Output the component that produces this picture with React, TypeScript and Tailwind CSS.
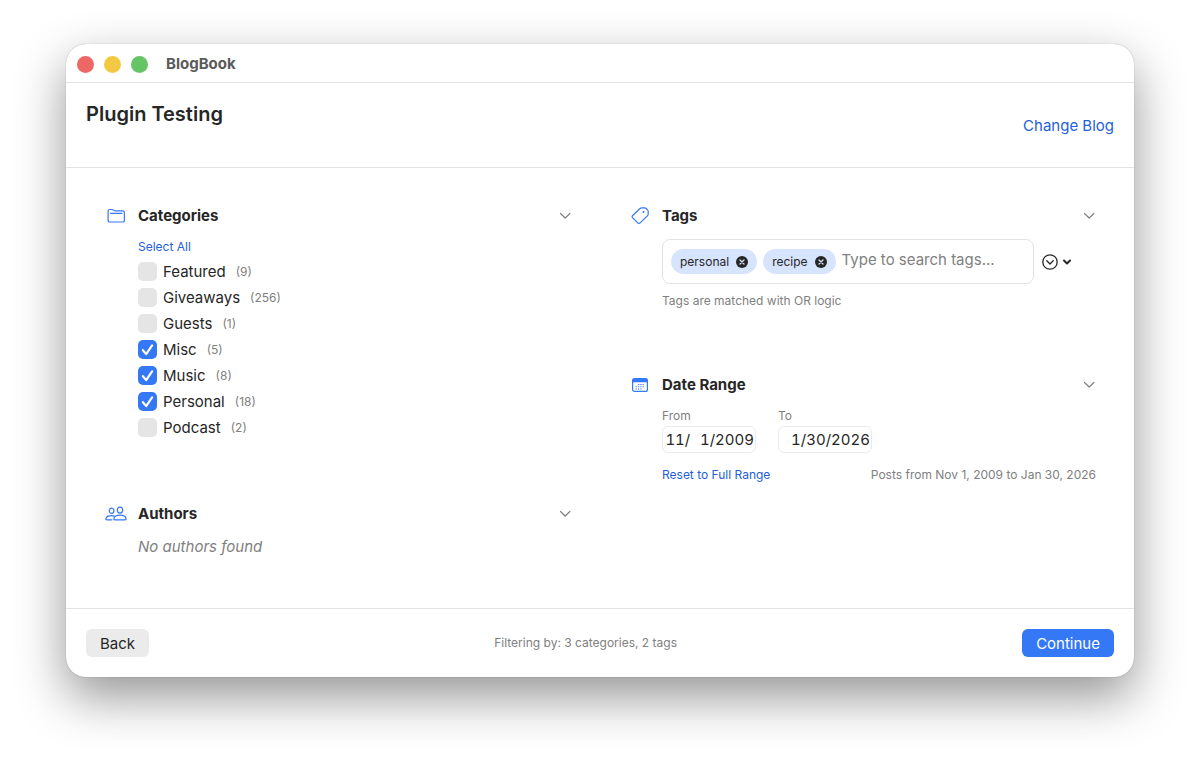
import { useState } from "react";
import type { ReactNode } from "react";

const CATEGORIES = [
  { name: "Featured", count: 9 },
  { name: "Giveaways", count: 256 },
  { name: "Guests", count: 1 },
  { name: "Misc", count: 5 },
  { name: "Music", count: 8 },
  { name: "Personal", count: 18 },
  { name: "Podcast", count: 2 },
];

function FolderIcon() {
  return (
    <svg width="20" height="16" viewBox="0 0 20 16" fill="none" stroke="#3478f6" strokeWidth="1.2" strokeLinejoin="round" strokeLinecap="round">
      <path d="M2.100 12.400V3.100c0-1 .6-1.600 1.600-1.600h2.400c.5 0 .8.1 1.200.4l.6.5c.3.3.6.4 1.100.4h7.700c1 0 1.700.6 1.700 1.600v8c0 1-.6 1.600-1.700 1.600H3.700c-1 0-1.600-.6-1.600-1.600z" />
      <path d="M4.500 5.300h11.500" />
    </svg>
  );
}

function TagIcon() {
  return (
    <svg width="20" height="20" viewBox="0 0 20 20" fill="none" stroke="#3478f6" strokeWidth="1.2" strokeLinejoin="round">
      <path d="M11.800 1.800h2.700c.7 0 1.200.2 1.700.7l1.300 1.300c.5.500.7 1 .7 1.700v2.500c0 .8-.2 1.300-.8 1.900l-7.300 7c-.8.800-1.600.800-2.400 0l-5-5c-.8-.8-.8-1.600 0-2.400l7.300-7c.5-.5 1-.7 1.800-.7z" />
      <circle cx="13.500" cy="6.100" r="1" fill="#3478f6" stroke="none" />
    </svg>
  );
}

function CalendarIcon() {
  return (
    <svg width="16" height="16" viewBox="0 0 16 16" fill="none">
      <rect x="0.600" y="1.600" width="14.800" height="12.800" rx="2" stroke="#3478f6" strokeWidth="1.200" />
      <path d="M0.600 5.200V3.500c0-1.200.8-2 2-2h10.800c1.200 0 2 .8 2 2v1.700z" fill="#3478f6" />
      <g fill="#3478f6">
        <path d="M6 7h1.200v1H6zM8.300 7h1.200v1H8.300zM10.600 7h1.200v1h-1.200zM3.700 9.200h1.200v1H3.700zM6 9.200h1.200v1H6zM8.300 9.200h1.200v1H8.300zM10.600 9.200h1.200v1h-1.200zM3.700 11.400h1.200v1H3.700zM6 11.400h1.200v1H6zM8.300 11.400h1.200v1H8.300z" />
      </g>
    </svg>
  );
}

function PeopleIcon() {
  return (
    <svg width="22" height="16" viewBox="0 0 22 16" fill="none" stroke="#3478f6" strokeWidth="1.200" strokeLinecap="round" strokeLinejoin="round">
      <ellipse cx="15" cy="4.100" rx="2.700" ry="3" />
      <path d="M10 13.800c-1 0-1.300-.6-1.100-1.300.5-2 2.900-3.300 6.100-3.300s5.600 1.300 6.100 3.300c.2.700-.1 1.300-1.100 1.300z" />
      <ellipse cx="6.600" cy="4.700" rx="2.300" ry="2.600" />
      <path d="M7 13.800H2c-1 0-1.300-.6-1.100-1.200.4-1.700 2.600-3 5.700-3 1 0 1.900.2 2.700.5" />
    </svg>
  );
}

function Chevron() {
  return (
    <svg width="13" height="8" viewBox="0 0 13 8" fill="none" stroke="#808080" strokeWidth="1.200" strokeLinecap="round" strokeLinejoin="round">
      <path d="M1.500 1.500L6.200 6l4.700-4.500" />
    </svg>
  );
}

function Section({ icon, title, children }: { icon: ReactNode; title: string; children: ReactNode }) {
  const [open, setOpen] = useState(true);

  return (
    <section>
      <div className="flex h-6 items-center">
        <span className="mr-2 flex w-6 shrink-0 justify-center">{icon}</span>
        <h2 className="ml-0.5 flex-1 pt-px text-[15px] font-bold">{title}</h2>
        <button type="button" aria-label={`Toggle ${title}`} aria-expanded={open} onClick={() => setOpen(!open)}>
          <Chevron />
        </button>
      </div>
      {open && <div className="pl-[34px]">{children}</div>}
    </section>
  );
}

function CategoryRow({ name, count, checked, onToggle }: { name: string; count: number; checked: boolean; onToggle: () => void }) {
  return (
    <label className="flex h-[26px] items-center text-[15px]">
      <span className="relative mr-1.5 size-[19px]">
        <input
          type="checkbox"
          checked={checked}
          onChange={onToggle}
          className="block size-[19px] appearance-none rounded-[5px] bg-[#e5e5e5] checked:bg-[#3478f6]"
        />
        {checked && (
          <svg className="pointer-events-none absolute inset-0" width="19" height="19" viewBox="0 0 19 19" fill="none" stroke="#fff" strokeWidth="2.200" strokeLinecap="round" strokeLinejoin="round">
            <path d="M4.900 10.200l3.300 3.900 5.900-8.800" />
          </svg>
        )}
      </span>
      <span className="pt-0.5">{name}</span>
      <span className="ml-2.5 pt-0.5 text-xs text-[#808080]">({count})</span>
    </label>
  );
}

function TagChip({ label, onRemove }: { label: string; onRemove: () => void }) {
  return (
    <span className="flex h-[25px] items-center gap-[7px] rounded-full bg-[#d6e4fd] px-[9px] text-xs">
      {label}
      <button type="button" aria-label={`Remove ${label}`} onClick={onRemove}>
        <svg width="12" height="12" viewBox="0 0 12 12">
          <circle cx="6" cy="6" r="6" fill="#262626" />
          <path d="M4 4l4 4M8 4L4 8" stroke="#d6e4fd" strokeWidth="1.300" strokeLinecap="round" />
        </svg>
      </button>
    </span>
  );
}

function DateField({ label, value, id }: { label: string; value: string; id: string }) {
  return (
    <div>
      <label htmlFor={id} className="block h-5 text-xs leading-5 text-[#808080]">{label}</label>
      <input
        id={id}
        defaultValue={value}
        className="block h-[27px] w-[94px] rounded-md border border-[#ebebeb] px-px text-right text-[15px] tabular-nums outline-none"
      />
    </div>
  );
}

export default function App() {
  const [selected, setSelected] = useState(["Misc", "Music", "Personal"]);
  const [tags, setTags] = useState(["personal", "recipe"]);

  const toggle = (name: string) => {
    setSelected(selected.includes(name) ? selected.filter((n) => n !== name) : [...selected, name]);
  };

  return (
    <div className="min-h-screen bg-white px-[66px] pt-11 pb-[87px] font-['Inter',sans-serif] text-[#262626]">
      <div className="rounded-[20px] bg-white shadow-[0_0_1px_rgba(0,0,0,0.4),0_20px_50px_rgba(0,0,0,0.42)]">
        <div className="flex h-[39px] items-center border-b border-[#e3e3e3] px-[11px] pt-0.5">
          <div className="flex gap-2.5">
            <span className="size-[17px] rounded-full bg-[#ed6765]" />
            <span className="size-[17px] rounded-full bg-[#f3c944]" />
            <span className="size-[17px] rounded-full bg-[#64c466]" />
          </div>
          <span className="ml-[18px] pt-px text-[15px] font-bold text-[#5a5a5a]">BlogBook</span>
        </div>

        <header className="flex h-[85px] items-center justify-between border-b border-[#e3e3e3] px-5 pt-0.5">
          <h1 className="-mt-6 text-xl font-semibold">Plugin Testing</h1>
          <a href="#" className="text-[15px] text-[#2460da]">Change Blog</a>
        </header>

        <main className="grid grid-cols-2 gap-14 px-[38px] pt-9 pb-12">
          <div className="flex flex-col gap-[62px]">
            <Section icon={<FolderIcon />} title="Categories">
              <button
                type="button"
                onClick={() => setSelected(CATEGORIES.map((c) => c.name))}
                className="mt-2 block h-[22px] text-xs text-[#2460da]"
              >
                Select All
              </button>
              {CATEGORIES.map((c) => (
                <CategoryRow key={c.name} {...c} checked={selected.includes(c.name)} onToggle={() => toggle(c.name)} />
              ))}
            </Section>
            <Section icon={<PeopleIcon />} title="Authors">
              <p className="mt-2 text-[15px] leading-[26px] text-[#808080] italic">No authors found</p>
            </Section>
          </div>

          <div className="flex flex-col gap-[62px]">
            <Section icon={<TagIcon />} title="Tags">
              <div className="mt-[11px] flex items-center">
                <div className="flex h-[45px] w-[372px] items-center gap-1.5 rounded-lg border border-[#e3e3e3] px-2">
                  {tags.map((t) => (
                    <TagChip key={t} label={t} onRemove={() => setTags(tags.filter((x) => x !== t))} />
                  ))}
                  <input
                    aria-label="Search tags"
                    placeholder="Type to search tags..."
                    className="mb-0.5 min-w-0 flex-1 text-[15px] outline-none placeholder:text-[#808080]"
                  />
                </div>
                <button type="button" aria-label="Browse tags" className="ml-2 flex items-center gap-1">
                  <svg width="16" height="16" viewBox="0 0 16 16" fill="none" stroke="#262626" strokeLinecap="round" strokeLinejoin="round">
                    <circle cx="8" cy="8" r="7.200" strokeWidth="1.300" />
                    <path d="M4.800 6.800L8 10l3.200-3.200" strokeWidth="1.300" />
                  </svg>
                  <svg width="10" height="8" viewBox="0 0 10 8" fill="none" stroke="#262626" strokeWidth="2" strokeLinecap="round" strokeLinejoin="round">
                    <path d="M2 2.500l3 3 3-3" />
                  </svg>
                </button>
              </div>
              <p className="mt-2 h-[19px] text-xs leading-[18px] text-[#808080]">Tags are matched with OR logic</p>
            </Section>
            <Section icon={<CalendarIcon />} title="Date Range">
              <div className="mt-[9px] flex gap-[22px]">
                <DateField id="from" label="From" value={"11/\u20071/2009"} />
                <DateField id="to" label="To" value="1/30/2026" />
              </div>
              <div className="mt-3 flex h-5 items-center justify-between text-xs">
                <button type="button" className="text-[#2460da]">Reset to Full Range</button>
                <span className="text-[#808080]">Posts from Nov 1, 2009 to Jan 30, 2026</span>
              </div>
            </Section>
          </div>
        </main>

        <footer className="flex h-[69px] items-center justify-between border-t border-[#e3e3e3] px-5">
          <button type="button" className="h-7 rounded-md bg-[#ebebeb] px-3.5 pt-0.5 text-[15px]">Back</button>
          <span className="text-xs text-[#808080]">Filtering by: 3 categories, 2 tags</span>
          <button type="button" className="h-7 rounded-md bg-[#3478f6] px-3.5 pt-0.5 text-[15px] text-white">Continue</button>
        </footer>
      </div>
    </div>
  );
}
